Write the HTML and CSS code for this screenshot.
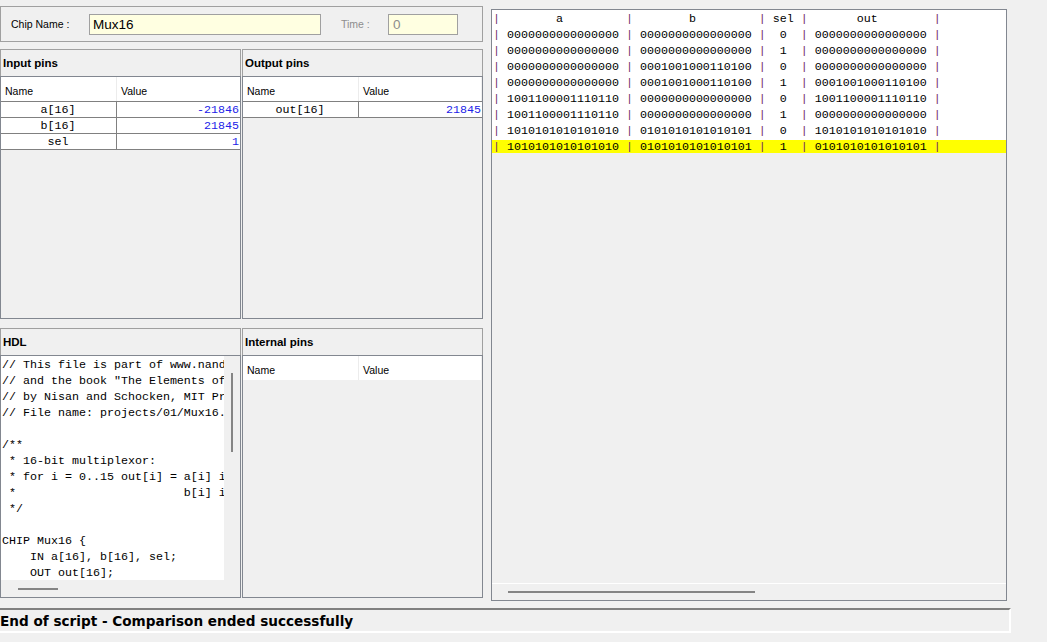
FILE: index.html
```html
<!DOCTYPE html>
<html>
<head>
<meta charset="utf-8">
<link rel="stylesheet" href="styles.css">
</head>
<body>
<div class="app">
  <div class="main">
    <div class="left">
      <div class="chipbar">
        <span class="lbl chip-lbl">Chip Name :</span>
        <div class="field chipname">Mux16</div>
        <span class="lbl time-lbl">Time :</span>
        <div class="field time">0</div>
      </div>
      <div class="row top-row">
        <div class="panel">
          <div class="phead">Input pins</div>
          <div class="pbody">
            <div class="thead"><div class="th th-name">Name</div><div class="th th-val">Value</div></div>
            <div class="tr first"><div class="td name">a[16]</div><div class="td val">-21846</div></div>
            <div class="tr"><div class="td name">b[16]</div><div class="td val">21845</div></div>
            <div class="tr"><div class="td name">sel</div><div class="td val">1</div></div>
          </div>
        </div>
        <div class="panel">
          <div class="phead">Output pins</div>
          <div class="pbody">
            <div class="thead narrow"><div class="th th-name">Name</div><div class="th th-val">Value</div></div>
            <div class="tr first"><div class="td name">out[16]</div><div class="td val">21845</div></div>
          </div>
        </div>
      </div>
      <div class="row bottom-row">
        <div class="panel">
          <div class="phead">HDL</div>
          <div class="pbody hdl-body">
            <div class="hdl-text">// This file is part of www.nand2tetris.org
// and the book "The Elements of Computing Systems"
// by Nisan and Schocken, MIT Press.
// File name: projects/01/Mux16.hdl

/**
 * 16-bit multiplexor:
 * for i = 0..15 out[i] = a[i] if sel == 0
 *                        b[i] if sel == 1
 */

CHIP Mux16 {
    IN a[16], b[16], sel;
    OUT out[16];</div>
            <div class="vscroll"><div class="vthumb"></div></div>
            <div class="hscroll"><div class="hthumb"></div></div>
            <div class="corner"></div>
          </div>
        </div>
        <div class="panel">
          <div class="phead">Internal pins</div>
          <div class="pbody">
            <div class="thead narrow"><div class="th th-name">Name</div><div class="th th-val">Value</div></div>
          </div>
        </div>
      </div>
    </div>
    <div class="right">
      <div class="rt-body">
<div class="rt-line"><span class="p">|</span>        a         <span class="p">|</span>        b         <span class="p">|</span> sel <span class="p">|</span>       out        <span class="p">|</span></div>
<div class="rt-line"><span class="p">|</span> 0000000000000000 <span class="p">|</span> 0000000000000000 <span class="p">|</span>  0  <span class="p">|</span> 0000000000000000 <span class="p">|</span></div>
<div class="rt-line"><span class="p">|</span> 0000000000000000 <span class="p">|</span> 0000000000000000 <span class="p">|</span>  1  <span class="p">|</span> 0000000000000000 <span class="p">|</span></div>
<div class="rt-line"><span class="p">|</span> 0000000000000000 <span class="p">|</span> 0001001000110100 <span class="p">|</span>  0  <span class="p">|</span> 0000000000000000 <span class="p">|</span></div>
<div class="rt-line"><span class="p">|</span> 0000000000000000 <span class="p">|</span> 0001001000110100 <span class="p">|</span>  1  <span class="p">|</span> 0001001000110100 <span class="p">|</span></div>
<div class="rt-line"><span class="p">|</span> 1001100001110110 <span class="p">|</span> 0000000000000000 <span class="p">|</span>  0  <span class="p">|</span> 1001100001110110 <span class="p">|</span></div>
<div class="rt-line"><span class="p">|</span> 1001100001110110 <span class="p">|</span> 0000000000000000 <span class="p">|</span>  1  <span class="p">|</span> 0000000000000000 <span class="p">|</span></div>
<div class="rt-line"><span class="p">|</span> 1010101010101010 <span class="p">|</span> 0101010101010101 <span class="p">|</span>  0  <span class="p">|</span> 1010101010101010 <span class="p">|</span></div>
<div class="rt-line hl"><span class="p">|</span> 1010101010101010 <span class="p">|</span> 0101010101010101 <span class="p">|</span>  1  <span class="p">|</span> 0101010101010101 <span class="p">|</span></div>
      </div>
      <div class="rt-hscroll"><div class="rt-hthumb"></div></div>
    </div>
  </div>
  <div class="status">End of script - Comparison ended successfully</div>
</div>
</body>
</html>
```
FILE: styles.css
```css
html, body {
  margin: 0;
  padding: 0;
}
body {
  background: #f0f0f0;
  width: 1047px;
  height: 642px;
  overflow: hidden;
  font-family: "Liberation Sans", Arial, sans-serif;
  color: #000;
}
.app {
  display: flex;
  flex-direction: column;
}
.main {
  display: flex;
  height: 608px;
}
.left {
  width: 483px;
  padding-top: 6px;
  display: flex;
  flex-direction: column;
}
.chipbar {
  height: 36px;
  box-sizing: border-box;
  border: 1px solid #a0a0a0;
  display: flex;
  align-items: center;
}
.lbl {
  font-size: 10.5px;
  display: block;
  flex: none;
}
.chip-lbl {
  margin-left: 10px;
  width: 78px;
}
.field {
  flex: none;
  height: 21px;
  box-sizing: border-box;
  border: 1px solid #a0a0a0;
  background: #ffffe1;
  font-size: 13.5px;
  line-height: 19px;
  padding-left: 3px;
  margin-top: 1px;
}
.chipname {
  width: 232px;
}
.time-lbl {
  margin-left: 20px;
  width: 47px;
  color: #8d8d8d;
}
.time {
  width: 70px;
  color: #8d8d8d;
  padding-left: 4px;
}
.row {
  display: flex;
  gap: 1px;
}
.top-row {
  margin-top: 7px;
}
.bottom-row {
  margin-top: 9px;
}
.panel {
  width: 241px;
  height: 270px;
  display: flex;
  flex-direction: column;
}
.phead {
  height: 27px;
  box-sizing: border-box;
  border: 1px solid #a0a0a0;
  border-bottom: none;
  font-weight: bold;
  font-size: 11.5px;
  padding-left: 2px;
  display: flex;
  align-items: center;
}
.pbody {
  flex: 1;
  border: 1px solid #828790;
  overflow: hidden;
  display: flex;
  flex-direction: column;
}
.thead {
  display: flex;
  height: 24px;
  background: #fff;
  font-size: 10.5px;
}
.thead.narrow {
  margin-right: 1px;
}
.th {
  padding-left: 4px;
  padding-top: 3px;
  display: flex;
  align-items: center;
  box-sizing: border-box;
}
.th-name {
  width: 116px;
  border-right: 1px solid #ececec;
}
.th-val {
  flex: 1;
}
.tr {
  display: flex;
  height: 16px;
  box-sizing: border-box;
  border-bottom: 1px solid #808080;
  background: #fff;
}
.tr.first {
  height: 17px;
  border-top: 1px solid #808080;
}
.td {
  font-family: "Liberation Mono", "Courier New", monospace;
  font-size: 11.67px;
  line-height: 17px;
  height: 15px;
  box-sizing: border-box;
}
.td.name {
  width: 116px;
  border-right: 1px solid #808080;
  text-align: center;
  padding-right: 1px;
}
.td.val {
  flex: 1;
  text-align: right;
  padding-right: 1px;
  color: #2323e8;
}
.hdl-body {
  display: grid;
  grid-template-columns: 223px 16px;
  grid-template-rows: 224px 16px;
}
.hdl-text {
  background: #fff;
  font-family: "Liberation Mono", "Courier New", monospace;
  font-size: 11.67px;
  line-height: 16px;
  white-space: pre;
  overflow: hidden;
  padding-left: 1px;
  padding-top: 1px;
}
.vscroll {
  display: flex;
  justify-content: center;
  padding-top: 17px;
}
.vthumb {
  width: 2px;
  height: 79px;
  background: #858585;
}
.hscroll {
  padding-top: 8px;
  padding-left: 17px;
}
.hthumb {
  width: 40px;
  height: 2px;
  background: #858585;
}
.right {
  margin-left: 8px;
  margin-top: 9px;
  width: 516px;
  height: 592px;
  box-sizing: border-box;
  border: 1px solid #828790;
  display: flex;
  flex-direction: column;
}
.rt-body {
  flex: 1;
  overflow: hidden;
}
.rt-line {
  height: 16px;
  line-height: 18px;
  background: #fff;
  white-space: pre;
  font-family: "Liberation Mono", "Courier New", monospace;
  font-size: 11.67px;
  padding-left: 1px;
}
.rt-line.hl {
  background: linear-gradient(#fff 0 2px, #ffff00 2px 15px, #f0f0f0 15px);
}
.p {
  color: #74306a;
}
.rt-hscroll {
  height: 17px;
  box-sizing: border-box;
  border-top: 1px solid #fff;
  padding-top: 7px;
  padding-left: 16px;
}
.rt-hthumb {
  width: 247px;
  height: 2px;
  background: #858585;
}
.status {
  width: 1011px;
  height: 25px;
  box-sizing: border-box;
  border-top: 2px solid #808080;
  border-right: 2px solid #fff;
  border-bottom: 2px solid #fff;
  font-family: "DejaVu Sans", Verdana, sans-serif;
  font-weight: bold;
  font-size: 13.6px;
  line-height: 23px;
  white-space: nowrap;
}
```
